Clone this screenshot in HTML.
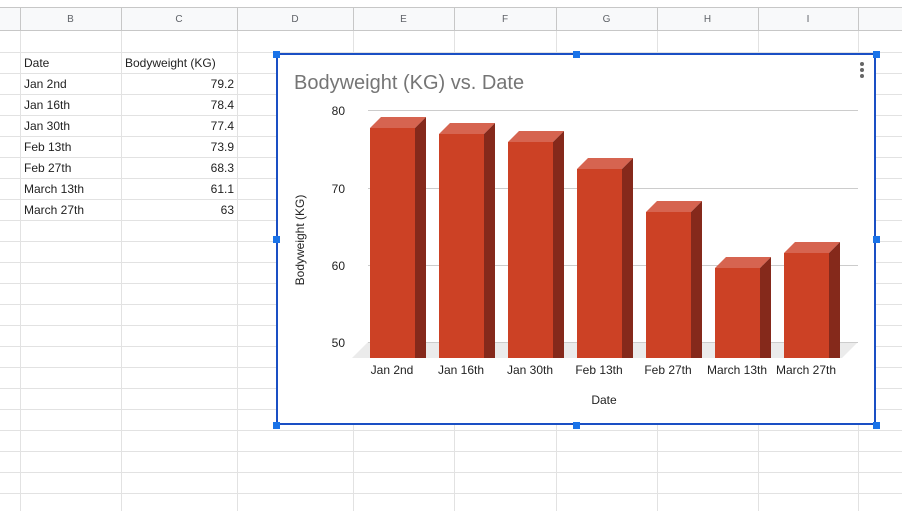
<!DOCTYPE html>
<html><head><style>
body{margin:0;width:902px;height:511px;overflow:hidden;background:#fff;font-family:"Liberation Sans",Arial,sans-serif;position:relative}
.hdr{position:absolute;left:0;top:7px;width:902px;height:24px;background:#f8f9fa;border-top:1px solid #c7c7c7;border-bottom:1px solid #c7c7c7;box-sizing:border-box}
.vl{position:absolute;width:1px;background:#e2e2e2;top:31px;height:480px}
.hv{position:absolute;width:1px;background:#c7c7c7;top:7px;height:24px}
.hl{position:absolute;left:0;width:902px;height:1px;background:#e2e2e2}
.ht{position:absolute;top:14px;font-size:10px;color:#5f6368;text-align:center}
.c{position:absolute;font-size:12px;color:#222}
.h{position:absolute;width:7px;height:7px;background:#1a73e8}
</style></head><body>
<div class="hdr"></div>
<div class="hv" style="left:20px"></div><div class="hv" style="left:121px"></div><div class="hv" style="left:237px"></div><div class="hv" style="left:353px"></div><div class="hv" style="left:454px"></div><div class="hv" style="left:556px"></div><div class="hv" style="left:657px"></div><div class="hv" style="left:758px"></div><div class="hv" style="left:858px"></div>
<div class="ht" style="left:20px;width:101px">B</div><div class="ht" style="left:121px;width:116px">C</div><div class="ht" style="left:237px;width:116px">D</div><div class="ht" style="left:353px;width:101px">E</div><div class="ht" style="left:454px;width:102px">F</div><div class="ht" style="left:556px;width:101px">G</div><div class="ht" style="left:657px;width:101px">H</div><div class="ht" style="left:758px;width:100px">I</div>
<div class="vl" style="left:20px"></div><div class="vl" style="left:121px"></div><div class="vl" style="left:237px"></div><div class="vl" style="left:353px"></div><div class="vl" style="left:454px"></div><div class="vl" style="left:556px"></div><div class="vl" style="left:657px"></div><div class="vl" style="left:758px"></div><div class="vl" style="left:858px"></div>
<div class="hl" style="top:52px"></div><div class="hl" style="top:73px"></div><div class="hl" style="top:94px"></div><div class="hl" style="top:115px"></div><div class="hl" style="top:136px"></div><div class="hl" style="top:157px"></div><div class="hl" style="top:178px"></div><div class="hl" style="top:199px"></div><div class="hl" style="top:220px"></div><div class="hl" style="top:241px"></div><div class="hl" style="top:262px"></div><div class="hl" style="top:283px"></div><div class="hl" style="top:304px"></div><div class="hl" style="top:325px"></div><div class="hl" style="top:346px"></div><div class="hl" style="top:367px"></div><div class="hl" style="top:388px"></div><div class="hl" style="top:409px"></div><div class="hl" style="top:430px"></div><div class="hl" style="top:451px"></div><div class="hl" style="top:472px"></div><div class="hl" style="top:493px"></div>
<div class="c" style="left:24px;top:56px">Date</div><div class="c" style="left:125px;top:56px">Bodyweight (KG)</div>
<div class="c" style="left:24px;top:77px">Jan 2nd</div><div class="c" style="left:125px;top:77px;width:109px;text-align:right">79.2</div>
<div class="c" style="left:24px;top:98px">Jan 16th</div><div class="c" style="left:125px;top:98px;width:109px;text-align:right">78.4</div>
<div class="c" style="left:24px;top:119px">Jan 30th</div><div class="c" style="left:125px;top:119px;width:109px;text-align:right">77.4</div>
<div class="c" style="left:24px;top:140px">Feb 13th</div><div class="c" style="left:125px;top:140px;width:109px;text-align:right">73.9</div>
<div class="c" style="left:24px;top:161px">Feb 27th</div><div class="c" style="left:125px;top:161px;width:109px;text-align:right">68.3</div>
<div class="c" style="left:24px;top:182px">March 13th</div><div class="c" style="left:125px;top:182px;width:109px;text-align:right">61.1</div>
<div class="c" style="left:24px;top:203px">March 27th</div><div class="c" style="left:125px;top:203px;width:109px;text-align:right">63</div>

<div style="position:absolute;left:276px;top:53px;width:600px;height:372px;background:#fff;border:2px solid #1a4fc4;box-sizing:border-box"></div>
<svg style="position:absolute;left:0;top:0" width="902" height="511" font-family="Liberation Sans,Arial,sans-serif">
<text x="294" y="89" font-size="20" fill="#757575">Bodyweight (KG) vs. Date</text>
<circle cx="862" cy="64" r="2" fill="#666"/><circle cx="862" cy="70" r="2" fill="#666"/><circle cx="862" cy="76" r="2" fill="#666"/>
<polygon points="368,342 858,342 842,358 352,358" fill="#ebebeb"/>
<g stroke="#cccccc" stroke-width="1"><line x1="368" y1="110.5" x2="858" y2="110.5"/><line x1="368" y1="188.5" x2="858" y2="188.5"/><line x1="368" y1="265.5" x2="858" y2="265.5"/><line x1="368" y1="342.5" x2="858" y2="342.5"/></g>
<g font-size="12" fill="#222" text-anchor="end"><text x="345" y="115">80</text><text x="345" y="193">70</text><text x="345" y="270">60</text><text x="345" y="347">50</text></g>
<g id="bars"></g>
<g font-size="12" fill="#222" text-anchor="middle"><text x="392" y="374">Jan 2nd</text><text x="461" y="374">Jan 16th</text><text x="530" y="374">Jan 30th</text><text x="599" y="374">Feb 13th</text><text x="668" y="374">Feb 27th</text><text x="737" y="374">March 13th</text><text x="806" y="374">March 27th</text><text x="604" y="404">Date</text></g>
<text transform="translate(304,240) rotate(-90)" font-size="12" fill="#222" text-anchor="middle">Bodyweight (KG)</text>
<g fill="#cc4125">
<rect x="370" y="128" width="45" height="230"/><rect x="439" y="134" width="45" height="224"/><rect x="508" y="142" width="45" height="216"/><rect x="577" y="169" width="45" height="189"/><rect x="646" y="212" width="45" height="146"/><rect x="715" y="268" width="45" height="90"/><rect x="784" y="253" width="45" height="105"/>
</g>
<g fill="#d66450">
<polygon points="370,128 381,117 426,117 415,128"/><polygon points="439,134 450,123 495,123 484,134"/><polygon points="508,142 519,131 564,131 553,142"/><polygon points="577,169 588,158 633,158 622,169"/><polygon points="646,212 657,201 702,201 691,212"/><polygon points="715,268 726,257 771,257 760,268"/><polygon points="784,253 795,242 840,242 829,253"/>
</g>
<g fill="#85291b">
<polygon points="415,128 426,117 426,358 415,358"/><polygon points="484,134 495,123 495,358 484,358"/><polygon points="553,142 564,131 564,358 553,358"/><polygon points="622,169 633,158 633,358 622,358"/><polygon points="691,212 702,201 702,358 691,358"/><polygon points="760,268 771,257 771,358 760,358"/><polygon points="829,253 840,242 840,358 829,358"/>
</g>
</svg>
<div class="h" style="left:273px;top:51px"></div><div class="h" style="left:573px;top:51px"></div><div class="h" style="left:873px;top:51px"></div>
<div class="h" style="left:273px;top:236px"></div><div class="h" style="left:873px;top:236px"></div>
<div class="h" style="left:273px;top:422px"></div><div class="h" style="left:573px;top:422px"></div><div class="h" style="left:873px;top:422px"></div>
</body></html>
